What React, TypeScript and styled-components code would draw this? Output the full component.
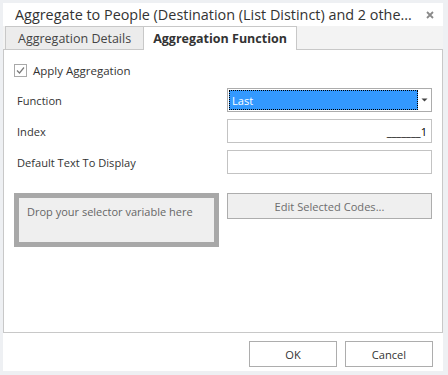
import styled, { createGlobalStyle } from 'styled-components';

const GlobalStyle = createGlobalStyle`
  html, body {
    margin: 0;
    padding: 0;
    background: #eef0f3;
  }
  body {
    font-family: 'Open Sans', 'Noto Sans', sans-serif;
    color: #333;
  }
`;

const Window = styled.div`
  margin: 3px 0 0 3px;
  width: 440px;
  height: 368px;
  background: #fff;
  display: flex;
  flex-direction: column;
`;

const TitleBar = styled.div`
  height: 23px;
  display: flex;
  align-items: center;
  padding: 0 8px 0 12px;
  font-size: 14.4px;
  color: #333;
`;

const Title = styled.span`
  flex: 1;
  white-space: nowrap;
  overflow: hidden;
`;

const CloseButton = styled.button`
  border: none;
  background: none;
  padding: 0;
  width: 10px;
  height: 12px;
  display: flex;
  align-items: center;
  justify-content: center;
`;

const TabStrip = styled.div`
  height: 23px;
  display: flex;
  align-items: stretch;
  padding-left: 3px;
  background: #f3f3f3;
`;

const Tab = styled.div<{ $active?: boolean }>`
  display: flex;
  align-items: center;
  padding: ${(props) => (props.$active ? '0 9px' : '0 12px')};
  font-size: 12.5px;
  border: 1px solid #c8c8c8;
  border-bottom: none;
  margin-left: -1px;
  background: ${(props) => (props.$active ? '#fff' : '#ececec')};
  font-weight: ${(props) => (props.$active ? 700 : 400)};
  color: ${(props) => (props.$active ? '#333' : '#444')};
  margin-bottom: ${(props) => (props.$active ? '-1px' : '0')};
  position: relative;
  z-index: ${(props) => (props.$active ? 1 : 0)};
`;

const Panel = styled.div`
  height: 284px;
  box-sizing: border-box;
  border: 1px solid #c8c8c8;
  padding: 14px 10px 0 10px;
  font-size: 11.1px;
`;

const CheckRow = styled.label`
  display: flex;
  align-items: center;
  gap: 6px;
  height: 13px;
  font-size: 11.5px;
  color: #333;
`;

const CheckBox = styled.span`
  width: 13px;
  height: 13px;
  box-sizing: border-box;
  border: 1px solid #a9a9a9;
  display: flex;
  align-items: center;
  justify-content: center;
`;

const FormGrid = styled.div`
  display: grid;
  grid-template-columns: 1fr 205px;
  column-gap: 8px;
  row-gap: 7px;
  margin-top: 11px;
`;

const FieldLabel = styled.div`
  display: flex;
  align-items: center;
  padding-left: 3px;
  font-size: 11.1px;
  color: #333;
`;

const Select = styled.div`
  height: 24px;
  box-sizing: border-box;
  border: 1px solid #acacac;
  display: flex;
`;

const SelectValue = styled.div`
  flex: 1;
  margin: 1px 0 1px 1px;
  background: #3399ff;
  outline: 1px dotted #000;
  outline-offset: -1px;
  color: #fff;
  font-size: 11.1px;
  display: flex;
  align-items: center;
  padding-left: 3px;
`;

const SelectArrow = styled.div`
  width: 13px;
  display: flex;
  align-items: center;
  justify-content: center;
`;

const TextBox = styled.div<{ $align?: string }>`
  height: 24px;
  box-sizing: border-box;
  border: 1px solid #c3c3c3;
  display: flex;
  align-items: center;
  justify-content: ${(props) => props.$align || 'flex-start'};
  padding: 0 4px;
  font-size: 11.1px;
  color: #000;
`;

const LowerGrid = styled.div`
  display: grid;
  grid-template-columns: 1fr 205px;
  column-gap: 8px;
  row-gap: 7px;
  margin-top: 19px;
`;

const DropZone = styled.div`
  height: 54px;
  box-sizing: border-box;
  border: 5px solid #a8a8a8;
  background: #efefef;
  padding: 6px 0 0 8px;
  font-size: 11px;
  color: #666;
`;

const EditButton = styled.button`
  grid-column: 2;
  height: 26px;
  border: 1px solid #adadad;
  background: #efefef;
  color: #6d6d6d;
  font-family: inherit;
  font-size: 11.1px;
`;

const Footer = styled.div`
  flex: 1;
  display: flex;
  justify-content: flex-end;
  gap: 8px;
  padding: 8px 10px 0 0;
`;

const DialogButton = styled.button`
  width: 88px;
  height: 26px;
  box-sizing: border-box;
  border: 1px solid #adadad;
  background: #fff;
  color: #333;
  font-family: inherit;
  font-size: 11.1px;
`;

const App = (): JSX.Element => (
  <>
    <GlobalStyle />
    <Window>
      <TitleBar>
        <Title>Aggregate to People (Destination (List Distinct) and 2 othe...</Title>
        <CloseButton>
          <svg width="8" height="8" viewBox="0 0 8 8">
            <path d="M1 1 L7 7 M7 1 L1 7" stroke="#8a8a8a" strokeWidth="1.8" />
          </svg>
        </CloseButton>
      </TitleBar>
      <TabStrip>
        <Tab>Aggregation Details</Tab>
        <Tab $active>Aggregation Function</Tab>
      </TabStrip>
      <Panel>
        <CheckRow>
          <CheckBox>
            <svg width="11" height="11" viewBox="0 0 11 11">
              <path d="M2 5.5 L4.5 8 L9 2.5" stroke="#7a7a7a" strokeWidth="1.2" fill="none" />
            </svg>
          </CheckBox>
          Apply Aggregation
        </CheckRow>
        <FormGrid>
          <FieldLabel>Function</FieldLabel>
          <Select>
            <SelectValue>Last</SelectValue>
            <SelectArrow>
              <svg width="7" height="4" viewBox="0 0 7 4">
                <path d="M0.5 0.5 L6.5 0.5 L3.5 3.5 Z" fill="#444" />
              </svg>
            </SelectArrow>
          </Select>
          <FieldLabel>Index</FieldLabel>
          <TextBox $align="flex-end">_______1</TextBox>
          <FieldLabel>Default Text To Display</FieldLabel>
          <TextBox />
        </FormGrid>
        <LowerGrid>
          <DropZone>Drop your selector variable here</DropZone>
          <EditButton>Edit Selected Codes...</EditButton>
        </LowerGrid>
      </Panel>
      <Footer>
        <DialogButton>OK</DialogButton>
        <DialogButton>Cancel</DialogButton>
      </Footer>
    </Window>
  </>
);

export default App;
